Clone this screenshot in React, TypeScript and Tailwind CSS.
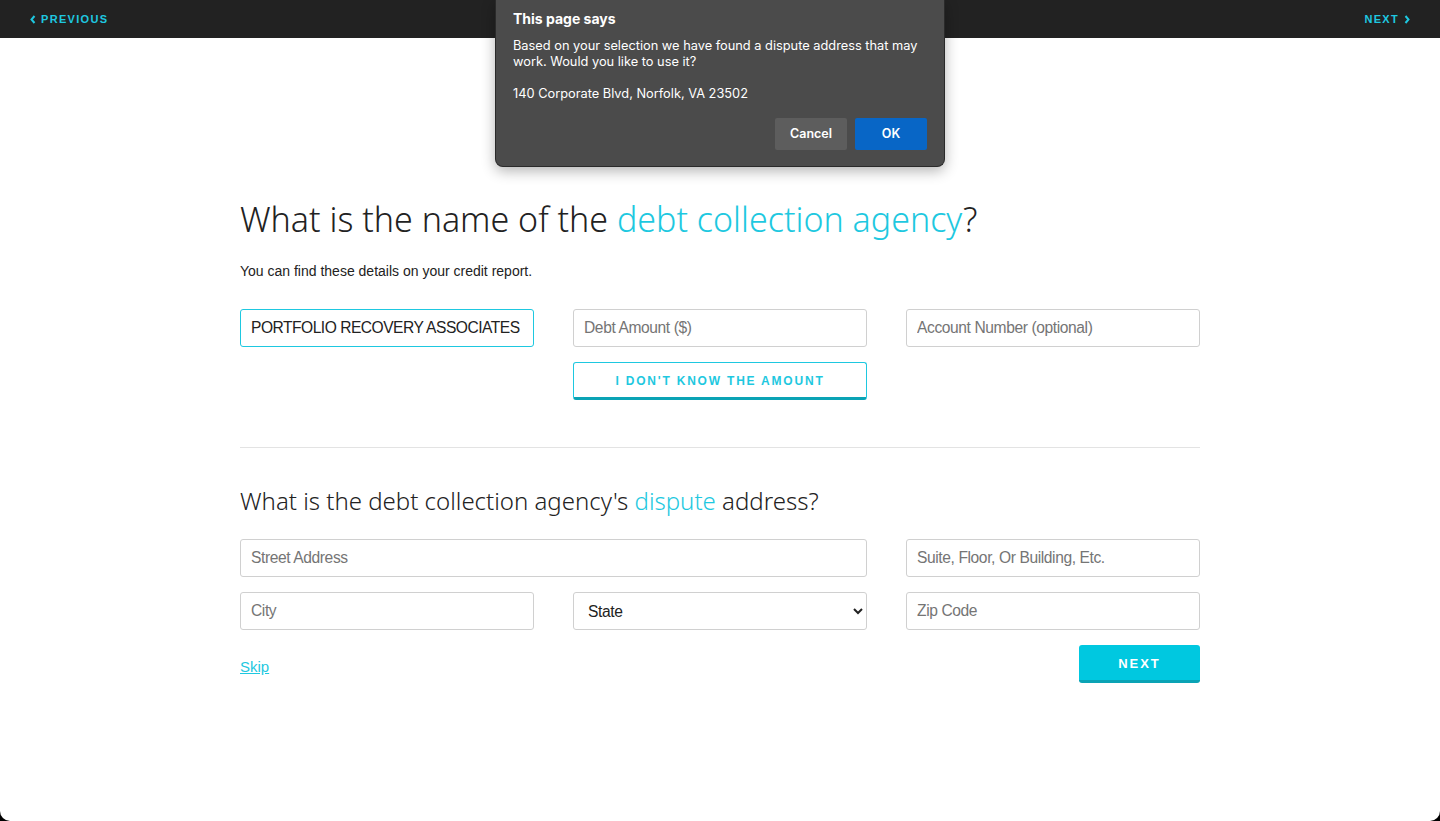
import React from "react";

const sans = { fontFamily: '"Liberation Sans", Arial, sans-serif' };

function TextInput({ placeholder, value, focused }: { placeholder: string; value?: string; focused?: boolean }) {
  return (
    <input
      type="text"
      placeholder={placeholder}
      defaultValue={value}
      className={
        focused
          ? "h-[38px] w-full rounded-[3px] border border-[#1ec8e0] bg-white px-[10px] text-[15.6px] tracking-[-0.5px] text-[#222] outline-none placeholder:text-[#757575] font-['Liberation_Sans',Arial,sans-serif]"
          : "h-[38px] w-full rounded-[3px] border border-[#d0d0d0] bg-white px-[10px] text-[15.6px] tracking-[-0.4px] text-[#222] outline-none placeholder:text-[#757575] font-['Liberation_Sans',Arial,sans-serif]"
      }
    />
  );
}

function Alert() {
  return (
    <div className="absolute left-[495px] top-0 z-10 w-[450px] rounded-b-[8px] border border-t-0 border-[#2a2a2a] bg-[#4b4b4b] px-[17px] pb-[16px] pt-[10px] text-white shadow-[0_4px_14px_rgba(0,0,0,0.3)] font-['Inter',sans-serif]">
      <div className="text-[14px] font-bold leading-[18px]">This page says</div>
      <p className="mt-[10px] text-[12.8px] leading-[16px]">
        Based on your selection we have found a dispute address that may work. Would you like to use it?
      </p>
      <p className="mt-[16px] text-[12.8px] leading-[16px]">140 Corporate Blvd, Norfolk, VA 23502</p>
      <div className="mt-[16px] flex justify-end gap-[8px]">
        <button className="h-[32px] w-[72px] rounded-[2px] bg-[#5d5d5d] text-[12.5px] font-semibold text-white">Cancel</button>
        <button className="h-[32px] w-[72px] rounded-[2px] bg-[#0866c6] text-[12.5px] font-semibold text-white">OK</button>
      </div>
    </div>
  );
}

export default function App() {
  return (
    <div className="relative h-[821px] w-[1440px] overflow-hidden bg-black">
      <div className="relative flex h-full flex-col overflow-hidden rounded-b-[10px] bg-white">
        {/* top nav */}
        <div className="flex h-[38px] shrink-0 items-center justify-between bg-[#222] px-[30px] text-[11px] font-bold tracking-[0.12em] text-[#1ec8e0]" style={sans}>
          <a className="flex items-center gap-[5px]">
            <svg width="6" height="9" viewBox="0 0 6 9" fill="none">
              <path d="M4.5 1 L1.5 4.5 L4.5 8" stroke="#1ec8e0" strokeWidth="2" />
            </svg>
            PREVIOUS
          </a>
          <a className="flex items-center gap-[5px]">
            NEXT
            <svg width="6" height="9" viewBox="0 0 6 9" fill="none">
              <path d="M1.5 1 L4.5 4.5 L1.5 8" stroke="#1ec8e0" strokeWidth="2" />
            </svg>
          </a>
        </div>

        <Alert />

        <main className="mx-auto w-[960px] pt-[157px]">
          <h1 className="text-[34px] font-light leading-[48px] text-[#222] font-['Noto_Sans',sans-serif]">
            What is the name of the <span className="text-[#1ec8e0]">debt collection agency</span>?
          </h1>
          <p className="mt-[18px] text-[14px] text-[#222]" style={sans}>
            You can find these details on your credit report.
          </p>

          <div className="mt-[27px] grid grid-cols-3 gap-x-[39px] gap-y-[15px]">
            <TextInput placeholder="Debt Collection Agency" value="PORTFOLIO RECOVERY ASSOCIATES" focused />
            <TextInput placeholder="Debt Amount ($)" />
            <TextInput placeholder="Account Number (optional)" />
            <div />
            <button
              className="h-[38px] w-full rounded-[3px] border border-b-[3px] border-[#1ec8e0] border-b-[#0aa3b5] bg-white pt-[2px] text-[12px] font-bold tracking-[0.15em] text-[#1ec8e0]"
              style={sans}
            >
              I DON'T KNOW THE AMOUNT
            </button>
          </div>

          <hr className="mt-[47px] border-t border-[#e3e3e3]" />

          <h2 className="mt-[36px] text-[24px] font-light leading-[34px] text-[#222] font-['Noto_Sans',sans-serif]">
            What is the debt collection agency's <span className="text-[#1ec8e0]">dispute</span> address?
          </h2>

          <div className="mt-[21px] grid grid-cols-3 gap-x-[39px] gap-y-[15px]">
            <div className="col-span-2">
              <TextInput placeholder="Street Address" />
            </div>
            <TextInput placeholder="Suite, Floor, Or Building, Etc." />
            <TextInput placeholder="City" />
            <select
              defaultValue=""
              className="h-[38px] w-full rounded-[3px] border border-[#d0d0d0] bg-white px-[10px] text-[15.6px] tracking-[-0.4px] text-[#222] outline-none"
              style={sans}
            >
              <option value="">State</option>
            </select>
            <TextInput placeholder="Zip Code" />
          </div>

          <div className="mt-[15px] flex items-center justify-between">
            <a href="#" className="mt-[6px] text-[15px] text-[#1ec8e0] underline" style={sans}>
              Skip
            </a>
            <button
              className="h-[38px] w-[121px] rounded-[3px] border-b-[3px] border-[#0aa3b5] bg-[#00c8e0] pt-[2px] text-[13px] font-bold tracking-[0.15em] text-white"
              style={sans}
            >
              NEXT
            </button>
          </div>
        </main>
      </div>
    </div>
  );
}
